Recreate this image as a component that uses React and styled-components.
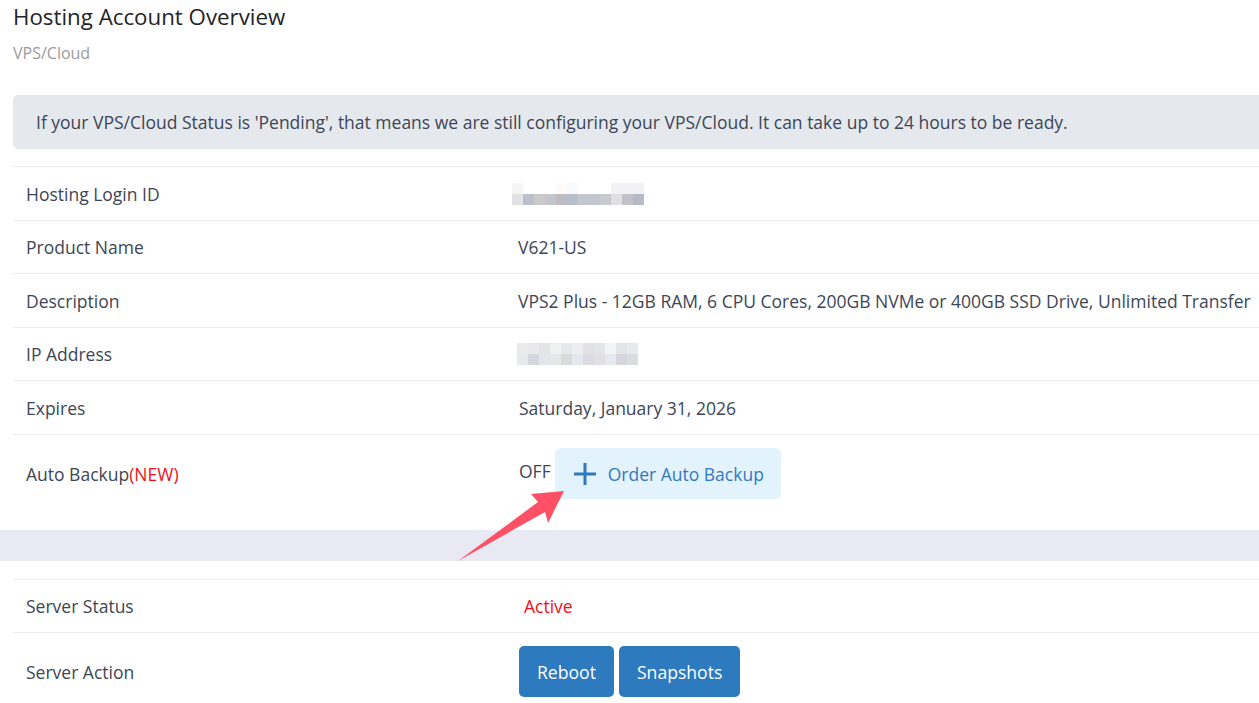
import React from "react";
import styled, { createGlobalStyle } from "styled-components";

const Global = createGlobalStyle`
  html, body { margin: 0; padding: 0; background: #fff; overflow: hidden; }
  body { font-family: "Open Sans", "Noto Sans", sans-serif; color: #3d4657; }
`;

const Page = styled.div`
  position: relative;
  width: 1259px;
  min-height: 703px;
`;

const Header = styled.header`
  padding: 3px 0 0 13px;
`;

const Title = styled.h1`
  margin: 0;
  font-size: 22.3px;
  font-weight: 400;
  line-height: 28px;
  color: #1f2429;
`;

const Subtitle = styled.div`
  margin-top: 12px;
  font-size: 16px;
  line-height: 20px;
  color: #9b9b9b;
`;

const Section = styled.section`
  padding-left: 13px;
`;

const Notice = styled.div`
  margin-top: 32px;
  height: 54px;
  display: flex;
  align-items: center;
  padding-left: 23px;
  background: #e5e9ee;
  border-radius: 5px 0 0 5px;
  font-size: 17.5px;
  color: #3d4657;
  white-space: nowrap;
`;

const Table = styled.div`
  margin-top: ${(p) => p.$gap}px;
`;

const Row = styled.div`
  display: grid;
  grid-template-columns: 492px 1fr;
  align-items: center;
  min-height: ${(p) => p.$h}px;
  border-top: 1px solid #e8ebef;
  box-sizing: border-box;
  padding: ${(p) => (p.$pad ? `${p.$pad[0]}px 0 ${p.$pad[1]}px` : "0")};
`;

const Label = styled.div`
  padding-left: 13px;
  font-size: 17.5px;
  color: #3d4657;
`;

const New = styled.span`
  color: #f20f17;
`;

const Value = styled.div`
  padding-left: ${(p) => (p.$indent ?? 14)}px;
  font-size: 17.5px;
  color: ${(p) => p.$color || "#3d4657"};
  white-space: nowrap;
  display: flex;
  align-items: center;
  gap: ${(p) => p.$gap || 0}px;
`;

const Mosaic = styled.div`
  display: grid;
  grid-template-columns: repeat(${(p) => p.$cols}, 11px);
  grid-auto-rows: 11px;
`;

const Cell = styled.span`
  background: ${(p) => p.$c};
`;

const Off = styled.span`
  align-self: flex-start;
  margin-top: 11px;
`;

const OrderButton = styled.button`
  display: flex;
  align-items: center;
  gap: 11px;
  height: 51px;
  padding: 0 17px 0 18px;
  border: none;
  border-radius: 6px;
  background: #e2f3fd;
  color: #3579bd;
  font-family: inherit;
  font-size: 17.5px;
  cursor: pointer;
`;

const Band = styled.div`
  height: 31px;
  background: #e8e9f3;
`;

const ActionButton = styled.button`
  height: 51px;
  padding: 0 18px;
  border: none;
  border-radius: 5px;
  background: #2e7abf;
  color: #fff;
  font-family: inherit;
  font-size: 17.6px;
  cursor: pointer;
`;

const Arrow = styled.svg`
  position: absolute;
  left: 0;
  top: 0;
  pointer-events: none;
`;

const loginMosaic = [
  "#f5f5f5", "#ffffff", "#ffffff", "#ffffff", "#fdfaf7", "#f8f9fc", "#ffffff", "#ffffff", "#ffffff", "#f2f2f4", "#f2f2f4", "#f2f2f4",
  "#e2e2e4", "#bcc0cb", "#ccc9cc", "#c2c6cc", "#bdbcc3", "#b8bfcc", "#c4c6cf", "#c5c7cf", "#c9cace", "#e0e0e2", "#c3c0c8", "#b5bac6",
];

const ipMosaic = [
  "#e9eaec", "#e9e9ec", "#e3e4e6", "#eff0f0", "#e6e7ea", "#edeef0", "#e1e1e6", "#e3e4e6", "#f3f4f5", "#e3e4e7", "#e6e9ee",
  "#e8e9eb", "#d6d7dc", "#e4e5e9", "#e6e7e8", "#d9d9de", "#e5e8ec", "#dcdbe0", "#e1e1e3", "#e6eaef", "#d7d6dc", "#dbdce0",
];

function Redacted({ cols, colors }) {
  return (
    <Mosaic $cols={cols}>
      {colors.map((c, i) => (
        <Cell key={i} $c={c} />
      ))}
    </Mosaic>
  );
}

function PlusIcon() {
  return (
    <svg width="24" height="24" viewBox="0 0 24 24">
      <path d="M12 1v22M1 12h22" stroke="#2f79bd" strokeWidth="3" fill="none" />
    </svg>
  );
}

export default function App() {
  return (
    <Page>
      <Global />
      <Header>
        <Title>Hosting Account Overview</Title>
        <Subtitle>VPS/Cloud</Subtitle>
      </Header>

      <Section>
        <Notice>
          If your VPS/Cloud Status is 'Pending', that means we are still configuring your VPS/Cloud. It can take up to 24 hours to be ready.
        </Notice>

        <Table $gap={17}>
          <Row $h={54}>
            <Label>Hosting Login ID</Label>
            <Value $indent={7}>
              <Redacted cols={12} colors={loginMosaic} />
            </Value>
          </Row>
          <Row $h={53}>
            <Label>Product Name</Label>
            <Value $indent={13}>V621-US</Value>
          </Row>
          <Row $h={54}>
            <Label>Description</Label>
            <Value $indent={13}>VPS2 Plus - 12GB RAM, 6 CPU Cores, 200GB NVMe or 400GB SSD Drive, Unlimited Transfer</Value>
          </Row>
          <Row $h={53}>
            <Label>IP Address</Label>
            <Value $indent={12}>
              <Redacted cols={11} colors={ipMosaic} />
            </Value>
          </Row>
          <Row $h={54}>
            <Label>Expires</Label>
            <Value>Saturday, January 31, 2026</Value>
          </Row>
          <Row $h={96} $pad={[13, 31]}>
            <Label>
              Auto Backup<New>(NEW)</New>
            </Label>
            <Value $gap={4}>
              <Off>OFF</Off>
              <OrderButton>
                <PlusIcon />
                Order Auto Backup
              </OrderButton>
            </Value>
          </Row>
        </Table>
      </Section>

      <Band />

      <Section>
        <Table $gap={18}>
          <Row $h={53}>
            <Label>Server Status</Label>
            <Value $indent={19} $color="#f20f17">Active</Value>
          </Row>
          <Row $h={80} $pad={[13, 16]}>
            <Label>Server Action</Label>
            <Value $gap={5}>
              <ActionButton>Reboot</ActionButton>
              <ActionButton>Snapshots</ActionButton>
            </Value>
          </Row>
        </Table>
      </Section>

      <Arrow width="1259" height="703" viewBox="0 0 1259 703">
        <polygon
          points="458,561 538,502 531,494 564,491 548,523 545,512"
          fill="#ff5066"
        />
      </Arrow>
    </Page>
  );
}
